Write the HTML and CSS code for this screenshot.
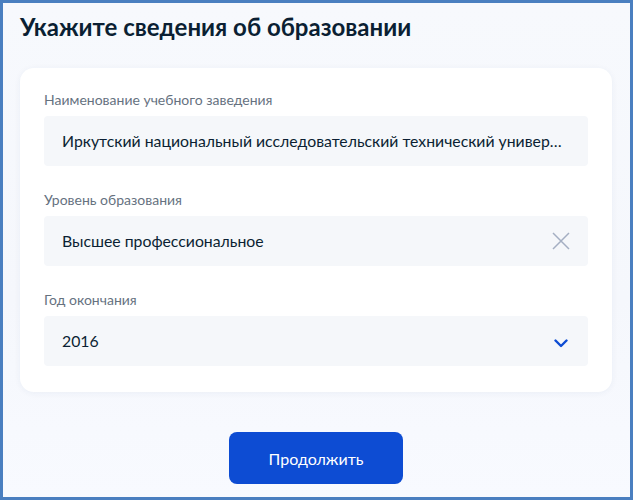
FILE: index.html
```html
<!DOCTYPE html>
<html lang="ru">
<head>
<meta charset="utf-8">
<link rel="stylesheet" href="styles.css">
</head>
<body>
<div class="frame">
  <h1 class="title">Укажите сведения об образовании</h1>
  <div class="card">
    <div class="field">
      <div class="label">Наименование учебного заведения</div>
      <div class="input"><span class="value">Иркутский национальный исследовательский технический университет</span></div>
    </div>
    <div class="field">
      <div class="label">Уровень образования</div>
      <div class="input"><span class="value">Высшее профессиональное</span>
        <svg class="icon-clear" width="18" height="18" viewBox="0 0 18 18"><path d="M1 1 L17 17 M17 1 L1 17" stroke="#a4afc2" stroke-width="1.5" fill="none"/></svg>
      </div>
    </div>
    <div class="field">
      <div class="label">Год окончания</div>
      <div class="input"><span class="value">2016</span>
        <svg class="icon-chevron" width="14" height="9" viewBox="0 0 14 9"><path d="M1.5 1.5 L7 7 L12.5 1.5" stroke="#0d4cd3" stroke-width="2.4" fill="none" stroke-linecap="round" stroke-linejoin="round"/></svg>
      </div>
    </div>
  </div>
  <div class="actions">
    <button class="btn">Продолжить</button>
  </div>
</div>
</body>
</html>
```
FILE: styles.css
```css
html, body {
  margin: 0;
  padding: 0;
}
body {
  font-family: Lato, "Noto Sans", sans-serif;
  color: #0b1f33;
}
.frame {
  box-sizing: border-box;
  width: 633px;
  height: 500px;
  border: 3px solid #4a7fc0;
  background: linear-gradient(180deg, #f7f9fd 0%, #f5f7fc 60%, #f8faff 100%);
  padding: 0 18px 0 17px;
  display: flex;
  flex-direction: column;
}
.title {
  margin: 0;
  padding-top: 8px;
  height: 65px;
  box-sizing: border-box;
  font-size: 24px;
  line-height: 32px;
  font-weight: 700;
  color: #0b1f33;
}
.card {
  background: #fff;
  border-radius: 14px;
  box-shadow: 0 1px 6px rgba(30, 60, 120, 0.06);
  padding: 24px 24px 26px;
  display: flex;
  flex-direction: column;
  gap: 26px;
}
.field {
  display: flex;
  flex-direction: column;
  gap: 8px;
}
.label {
  font-size: 14px;
  line-height: 16px;
  color: #66727f;
}
.input {
  height: 50px;
  background: #f5f7fa;
  border-radius: 4px;
  padding: 0 20px 0 18px;
  display: flex;
  align-items: center;
  gap: 12px;
}
.value {
  flex: 1;
  min-width: 0;
  font-size: 15.8px;
  line-height: 24px;
  color: #0b1f33;
  white-space: nowrap;
  overflow: hidden;
  text-overflow: ellipsis;
}
.value-long {
  margin-right: -4px;
}
.icon-clear {
  flex: none;
  margin-right: -2px;
}
.icon-chevron {
  flex: none;
  margin-top: 5px;
}
.actions {
  display: flex;
  justify-content: center;
  padding-top: 40px;
}
.btn {
  width: 174px;
  height: 52px;
  border: none;
  border-radius: 8px;
  background: #0d4cd3;
  color: #fff;
  font-family: Lato, "Noto Sans", sans-serif;
  font-size: 16px;
}
```
